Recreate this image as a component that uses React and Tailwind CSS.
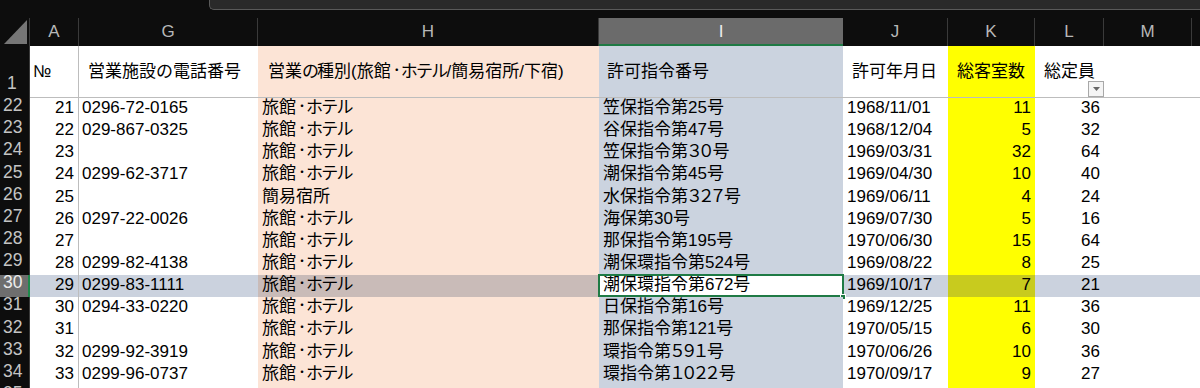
import React from 'react'

const rows = [
  ['22', '21', '0296-72-0165', '旅館・ホテル', '笠保指令第25号', '1968/11/01', '11', '36'],
  ['23', '22', '029-867-0325', '旅館・ホテル', '谷保指令第47号', '1968/12/04', '5', '32'],
  ['24', '23', '', '旅館・ホテル', '笠保指令第３０号', '1969/03/31', '32', '64'],
  ['25', '24', '0299-62-3717', '旅館・ホテル', '潮保指令第45号', '1969/04/30', '10', '40'],
  ['26', '25', '', '簡易宿所', '水保指令第３２７号', '1969/06/11', '4', '24'],
  ['27', '26', '0297-22-0026', '旅館・ホテル', '海保第30号', '1969/07/30', '5', '16'],
  ['28', '27', '', '旅館・ホテル', '那保指令第195号', '1970/06/30', '15', '64'],
  ['29', '28', '0299-82-4138', '旅館・ホテル', '潮保環指令第524号', '1969/08/22', '8', '25'],
  ['30', '29', '0299-83-1111', '旅館・ホテル', '潮保環指令第672号', '1969/10/17', '7', '21'],
  ['31', '30', '0294-33-0220', '旅館・ホテル', '日保指令第16号', '1969/12/25', '11', '36'],
  ['32', '31', '', '旅館・ホテル', '那保指令第121号', '1970/05/15', '6', '30'],
  ['33', '32', '0299-92-3919', '旅館・ホテル', '環指令第５９１号', '1970/06/26', '10', '36'],
  ['34', '33', '0299-96-0737', '旅館・ホテル', '環指令第１０２２号', '1970/09/17', '9', '27'],
  ['35', '', '', '', '', '', '', ''],
]

// Japanese text: tighten the middle dot, kana and full-width digits like the proportional font in the sheet
function Jp({ t }) {
  return t.split(/(・|[ァ-ヶー]+|[０-９]+|の)/).map((part, i) => {
    if (part === '・') return <span key={i} className="text-[12px] align-[2px] tracking-[-2px]">{part}</span>
    if (part === 'の') return <span key={i} className="tracking-[-2px]">{part}</span>
    if (/^[ァ-ヶー]+$/.test(part)) return <span key={i} className="tracking-[-1.7px]">{part}</span>
    if (/^[０-９]+$/.test(part)) return <span key={i} className="ml-[-2px] mr-[3px] tracking-[-5.3px]">{part}</span>
    return part
  })
}

function DataRow({ r }) {
  const [num, no, tel, kind, permit, date, rooms, cap] = r
  const sel = num === '30'
  return (
    <div className="flex h-[22.15px] leading-[19px] whitespace-nowrap">
      <div
        className={`w-[30px] shrink-0 flex items-end pb-[5px] pl-[3px] text-[17.5px] ${
          sel ? 'bg-[#6e6e6e] text-[#ececec] border-r-2 border-[#1f8a4c]' : 'bg-[#0d0d0d] text-[#c4c4c4] border-r border-[#3a3a3a]'
        }`}
      >
        {num}
      </div>
      <div className={`w-[49px] shrink-0 border-r border-[#bdbdbd] text-right pr-[4px] ${sel ? 'bg-[#cbd2de]' : 'bg-white'}`}>{no}</div>
      <div className={`w-[179px] shrink-0 pl-[3px] ${sel ? 'bg-[#cbd2de]' : 'bg-white'}`}>{tel}</div>
      <div className={`w-[341px] shrink-0 pl-[4px] ${sel ? 'bg-[#c9bbb8]' : 'bg-[#fce4d6]'}`}>
        <Jp t={kind} />
      </div>
      <div className={`relative w-[244px] shrink-0 pl-[4px] ${sel ? 'bg-white' : 'bg-[#cbd3df]'}`}>
        <Jp t={permit} />
        {sel && (
          <>
            <div className="absolute -left-[1px] -right-[1px] -top-[1px] bottom-0 border-2 border-[#1f7a45]" />
            <div className="absolute -right-[3px] -bottom-[3px] h-[6px] w-[6px] border border-white bg-[#1f7a45]" />
          </>
        )}
      </div>
      <div className={`w-[105px] shrink-0 pl-[4px] ${sel ? 'bg-[#cbd2de]' : 'bg-white'}`}>{date}</div>
      <div className={`w-[87px] shrink-0 text-right pr-[4px] ${sel ? 'bg-[#c8cb1e]' : 'bg-[#ffff00]'}`}>{rooms}</div>
      <div className={`w-[69px] shrink-0 text-right pr-[4px] ${sel ? 'bg-[#cbd2de]' : 'bg-white'}`}>{cap}</div>
      <div className={`flex-1 ${sel ? 'bg-[#cbd2de]' : 'bg-white'}`} />
    </div>
  )
}

export default function App() {
  return (
    <div className="h-[388px] w-[1200px] overflow-hidden bg-[#0d0d0d] font-['Liberation_Sans','Noto_Sans_CJK_JP',sans-serif] text-[17px] text-black">
      {/* ribbon edge */}
      <div className="flex h-[10px]">
        <div className="w-[209px] shrink-0" />
        <div className="flex-1 rounded-bl-[5px] border-b border-l border-[#5a5a5a] bg-[#2a2a2a]" />
      </div>
      <div className="h-[8px]" />

      {/* column letters */}
      <div className="flex h-[28px] leading-[28px] text-[#b8b8b8]">
        <div className="w-[30px] shrink-0 border-r border-[#3a3a3a] pl-[4px] pt-[2px]">
          <svg width="24" height="24" viewBox="0 0 24 24">
            <polygon points="0,24 23,24 23,0" fill="#767676" />
          </svg>
        </div>
        <div className="w-[49px] shrink-0 border-r border-[#3a3a3a] text-center">A</div>
        <div className="w-[179px] shrink-0 border-r border-[#3a3a3a] text-center">G</div>
        <div className="w-[341px] shrink-0 border-r border-[#3a3a3a] text-center">H</div>
        <div className="w-[244px] shrink-0 border-b-2 border-[#1f7a45] bg-[#6b6b6b] text-center text-[#ededed]">I</div>
        <div className="w-[105px] shrink-0 border-r border-[#3a3a3a] text-center">J</div>
        <div className="w-[87px] shrink-0 border-r border-[#3a3a3a] text-center">K</div>
        <div className="w-[69px] shrink-0 border-r border-[#3a3a3a] text-center">L</div>
        <div className="w-[88px] shrink-0 border-r border-[#3a3a3a] text-center">M</div>
        <div className="flex-1" />
      </div>

      {/* header row 1 */}
      <div className="flex h-[52px] leading-[19px] whitespace-nowrap">
        <div className="w-[30px] shrink-0 flex items-end pb-[5px] pl-[7px] text-[17.5px] bg-[#0d0d0d] text-[#c4c4c4] border-r border-[#3a3a3a]">1</div>
        <div className="w-[49px] shrink-0 flex items-center pl-[3px] bg-white border-r border-b border-[#bdbdbd]">№</div>
        <div className="w-[179px] shrink-0 flex items-center pl-[9px] bg-white border-b border-[#bdbdbd]">営業施設の電話番号</div>
        <div className="w-[341px] shrink-0 flex items-center pl-[10px] bg-[#fce4d6] border-b border-[#bdbdbd]">
          <span>
            <Jp t="営業の種別(旅館・ホテル/簡易宿所/下宿)" />
          </span>
        </div>
        <div className="w-[244px] shrink-0 flex items-center pl-[8px] bg-[#cbd3df] border-b border-[#bdbdbd]">許可指令番号</div>
        <div className="w-[105px] shrink-0 flex items-center pl-[9px] bg-white border-b border-[#bdbdbd]">許可年月日</div>
        <div className="w-[87px] shrink-0 flex items-center pl-[9px] bg-[#ffff00] border-b border-[#bdbdbd]">総客室数</div>
        <div className="relative w-[69px] shrink-0 flex items-center pl-[9px] bg-white border-b border-[#bdbdbd]">
          総定員
          <div className="absolute right-0 bottom-0 flex h-[16px] w-[16px] items-center justify-center border border-[#a8a8a8] bg-[#f4f4f4]">
            <svg width="7" height="4" viewBox="0 0 7 4">
              <polygon points="0,0 7,0 3.5,4" fill="#666" />
            </svg>
          </div>
        </div>
        <div className="flex-1 bg-white border-b border-[#bdbdbd]" />
      </div>

      {rows.map((r) => (
        <DataRow key={r[0]} r={r} />
      ))}
    </div>
  )
}
